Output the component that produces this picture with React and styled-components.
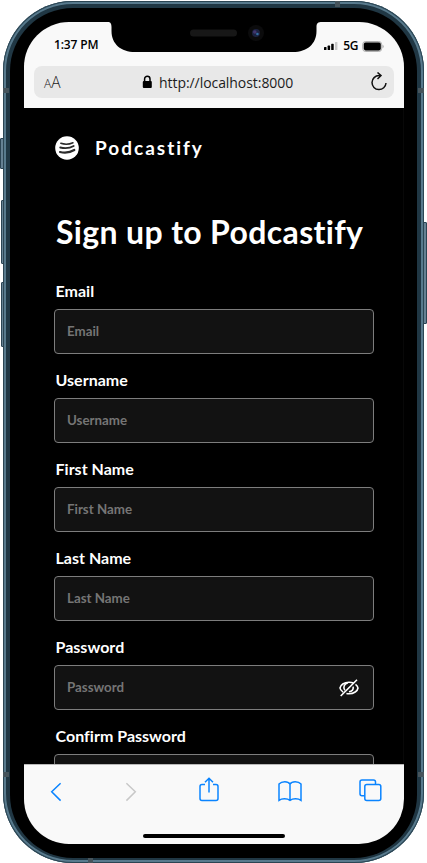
import React from "react";
import styled, { createGlobalStyle } from "styled-components";

const GlobalStyle = createGlobalStyle`
  * { box-sizing: border-box; }
  html, body { margin: 0; padding: 0; background: #fff; overflow: hidden; }
`;

const Stage = styled.div`
  position: relative;
  width: 427px;
  height: 863px;
  padding: 1px 3px 0;
  overflow: hidden;
`;

const SideButton = styled.span`
  position: absolute;
  top: ${(p) => p.$top}px;
  ${(p) => p.$side}: ${(p) => p.$inset || 0}px;
  width: 5px;
  height: ${(p) => p.$height}px;
  border: 1px solid #2c4554;
  border-radius: 1px;
  background: #668193;
`;

const Rim = styled.div`
  position: relative;
  width: 421px;
  height: 862px;
  padding: 7px 7px 5px;
  border-radius: 70px;
  background: #203744;
  box-shadow: inset 0 0 0 1px #2b4553, inset 0 0 0 3px #587a8d;
`;

const Antenna = styled.span`
  position: absolute;
  left: ${(p) => p.$x}px;
  top: ${(p) => p.$y}px;
  width: ${(p) => (p.$flat ? 5 : 6)}px;
  height: ${(p) => (p.$flat ? 6 : 5)}px;
  background: #46545c;
`;

const Bezel = styled.div`
  height: 100%;
  padding: 14px 13px 13px 14px;
  border-radius: 63px;
  background: #000;
`;

const Screen = styled.div`
  position: relative;
  display: flex;
  flex-direction: column;
  width: 380px;
  height: 822px;
  border-radius: 45px;
  overflow: hidden;
  background: #000;
`;

const BrowserTop = styled.header`
  flex: 0 0 86px;
  padding: 0 10px;
  background: #f9f9f9;
  color: #000;
`;

const StatusBar = styled.div`
  display: flex;
  justify-content: space-between;
  height: 44px;
  padding: 13px 10px 0 20px;
  font: 600 12px/20px "Open Sans", sans-serif;
  letter-spacing: -0.15px;
`;

const StatusRight = styled.div`
  display: flex;
  align-items: center;
  height: 22px;
  span { margin: 0 4px 0 5px; font-weight: 600; letter-spacing: -0.4px; }
`;

const Notch = styled.svg`
  position: absolute;
  top: 0;
  left: 84px;
`;

const AddressBar = styled.div`
  display: flex;
  align-items: center;
  height: 32px;
  padding: 0 7px 0 10px;
  border-radius: 8px;
  background: #e8e8e8;
  font: 14px/32px "Open Sans", sans-serif;
  color: #1c1c1c;
`;

const TextSize = styled.span`
  width: 98px;
  padding-top: 1px;
  font-size: 15.5px;
  font-weight: 300;
  line-height: 31px;
  small { font-size: 12px; }
`;

const Url = styled.span`
  flex: 1;
  margin-left: 6px;
  padding-top: 1px;
  font-size: 14px;
  line-height: 31px;
  letter-spacing: -0.06px;
  white-space: nowrap;
`;

const Page = styled.main`
  flex: 1;
  min-height: 0;
  overflow: hidden;
  padding: 28px 30px 0;
  border-right: 1px solid #080808;
  font-family: Lato, sans-serif;
  font-variant-ligatures: none;
  color: #fff;
`;

const Brand = styled.div`
  display: flex;
  align-items: center;
  gap: 16px;
  height: 24px;
  padding-left: 1px;
  font-size: 19px;
  font-weight: 700;
  line-height: 24px;
  letter-spacing: 2px;
`;

const Title = styled.h1`
  margin: 52px -10px 0 2px;
  font-size: 32px;
  font-weight: 700;
  line-height: 40px;
  white-space: nowrap;
  letter-spacing: 0.35px;
`;

const Form = styled.form`
  display: grid;
  gap: 16px;
  margin-top: 29px;
`;

const Field = styled.div`
  display: grid;
  grid-template-rows: 20px 45px;
  gap: 8px;
`;

const Label = styled.label`
  padding-left: 1.5px;
  font-size: 16px;
  font-weight: 700;
  line-height: 20px;
  letter-spacing: 0.02px;
`;

const InputBox = styled.div`
  display: flex;
  align-items: center;
  width: 320px;
  padding: 0 14px 0 12px;
  border: 1px solid #7d7d7d;
  border-radius: 4px;
  background: #121212;
`;

const Input = styled.input`
  flex: 1;
  min-width: 0;
  padding: 0 0 1px;
  border: 0;
  outline: 0;
  background: transparent;
  color: #fff;
  font: 700 13.33px/20px Lato, sans-serif;
  &::placeholder { color: #757575; opacity: 1; }
`;

const Toolbar = styled.nav`
  flex: 0 0 80px;
  border-top: 1px solid #b9b9b9;
  background: #f9f9f9;
`;

const ToolIcons = styled.div`
  display: flex;
  justify-content: space-between;
  padding: 12px 22px 0 25px;
  height: 69px;
`;

const ToolIcon = styled.svg`
  display: block;
  height: 28px;
  margin-left: ${(p) => p.$shift || 0}px;
  margin-right: ${(p) => -(p.$shift || 0)}px;
  fill: none;
  stroke: ${(p) => (p.$disabled ? "#c8c8c8" : "#0a84ff")};
  stroke-width: 1.5;
`;

const HomeBar = styled.div`
  width: 142px;
  height: 4px;
  margin: 0 auto;
  border-radius: 2px;
  background: #000;
`;

const NotchShape = () => (
  <Notch width="214" height="31" viewBox="0 0 214 31">
    <path d="M0 0H214C210 0 208.5 1 208.5 5V9C208.5 22 199 30 185 30H27C13 30 3.5 22 3.5 9V5C3.5 1 2 0 0 0Z" fill="#000" />
    <rect x="82" y="7.5" width="47" height="7" rx="3.5" fill="#171717" />
    <circle cx="148" cy="11" r="8" fill="#0b0b0c" />
    <circle cx="148" cy="11" r="4" fill="#1c2240" />
    <circle cx="146.8" cy="10" r="1.8" fill="#41366f" />
    <circle cx="149.4" cy="12" r="1.3" fill="#326fa3" />
  </Notch>
);

const Signal = () => (
  <svg width="14" height="10" viewBox="0 0 14 10">
    <rect x="0" y="6" width="2.5" height="3" rx=".6" />
    <rect x="3.6" y="4.6" width="2.5" height="4.4" rx=".6" />
    <rect x="7.2" y="2.8" width="2.5" height="6.2" rx=".6" />
    <rect x="11" y="1" width="2.4" height="8" rx=".6" fill="#c9c9c9" />
  </svg>
);

const Battery = () => (
  <svg width="22" height="12" viewBox="0 0 22 12">
    <rect x=".7" y="1.5" width="19" height="10" rx="3" fill="#d5d5d5" stroke="#b0b0b0" />
    <rect x="1.8" y="2.6" width="17" height="7.8" rx="1.8" />
    <path d="M20.6 4.8C22 5.5 22 7.5 20.6 8.2Z" fill="#999" />
  </svg>
);

const Lock = () => (
  <svg width="11" height="14" viewBox="0 0 11 14">
    <rect x=".8" y="6" width="9" height="7" rx="1" />
    <path d="M2.6 6.4V4a2.7 2.7 0 0 1 5.4 0v2.4" fill="none" stroke="#000" strokeWidth="1.5" />
  </svg>
);

const Reload = () => (
  <svg width="18" height="20" viewBox="0 0 18 20" fill="none" stroke="#111" strokeWidth="1.5">
    <path d="M11.5 3.6H10a7 7 0 1 0 7 7.4M8.5 .5 12 3.6 8.5 7" />
  </svg>
);

const Logo = () => (
  <svg width="24" height="24" viewBox="0 0 24 24" fill="none" stroke="#2b2b2b" strokeLinecap="round">
    <circle cx="12" cy="12" r="11.8" fill="#fff" stroke="none" />
    <path d="M5.8 7.3Q12 9.3 18 6.7" strokeWidth="1.5" />
    <path d="M5.2 11.5Q13 13.3 18.7 10" strokeWidth="1.8" />
    <path d="M5 16Q13 17.8 19.3 14" strokeWidth="2.2" />
  </svg>
);

const EyeOff = () => (
  <svg width="20" height="20" viewBox="0 0 20 20" fill="none" stroke="#fff" strokeWidth="1.6">
    <path d="M4.1 14.1C2.4 13 1.2 11.5 1 10c.5-3 4-5.8 9-5.8 1.8 0 3.2.3 4.5.9M16.5 6.3c1.5 1 2.3 2.3 2.5 3.7-.5 3-4 5.8-9 5.8-.9 0-1.8-.1-2.6-.3" />
    <path d="M5.8 12.2A4.5 4.5 0 0 1 8.8 5M14.2 8.6c.3 2.9-1.5 4.8-4.3 5.1M1.7 18 18 1.7" />
  </svg>
);

const fields = [
  { label: "Email" },
  { label: "Username" },
  { label: "First Name" },
  { label: "Last Name" },
  { label: "Password", secret: true },
  { label: "Confirm Password", secret: true },
];

export default function App() {
  return (
    <>
      <GlobalStyle />
      <Stage>
        <SideButton $side="left" $top={138} $height={31} />
        <SideButton $side="left" $inset={1} $top={200} $height={64} />
        <SideButton $side="left" $inset={1} $top={282} $height={65} />
        <SideButton $side="right" $top={222} $height={102} />
        <Rim>
          <Antenna $x={0} $y={87} />
          <Antenna $x={415} $y={87} />
          <Antenna $x={0} $y={771} />
          <Antenna $x={415} $y={771} />
          <Antenna $flat $x={332} $y={0} />
          <Antenna $flat $x={85} $y={857} />
          <Bezel>
            <Screen>
              <BrowserTop>
                <StatusBar>
                  <span>1:37 PM</span>
                  <StatusRight><Signal /><span>5G</span><Battery /></StatusRight>
                </StatusBar>
                <AddressBar>
                  <TextSize><small>A</small>A</TextSize>
                  <Lock />
                  <Url>http://localhost:8000</Url>
                  <Reload />
                </AddressBar>
              </BrowserTop>
              <NotchShape />
              <Page>
                <Brand><Logo /><span>Podcastify</span></Brand>
                <Title>Sign up to Podcastify</Title>
                <Form>
                  {fields.map((f) => (
                    <Field key={f.label}>
                      <Label htmlFor={f.label}>{f.label}</Label>
                      <InputBox>
                        <Input id={f.label} placeholder={f.label} type={f.secret ? "password" : "text"} />
                        {f.secret && <EyeOff />}
                      </InputBox>
                    </Field>
                  ))}
                </Form>
              </Page>
              <Toolbar>
                <ToolIcons>
                  <ToolIcon width="14" viewBox="0 0 14 28"><path d="M11.6 6.2 2.7 14.8l8.9 8.8" /></ToolIcon>
                  <ToolIcon $disabled $shift={1} width="14" viewBox="0 0 14 28"><path d="M2.4 6.2l8.9 8.6-8.9 8.8" /></ToolIcon>
                  <ToolIcon $shift={3} width="20" viewBox="0 0 20 28"><path d="M6 7.5H3a2 2 0 0 0-2 2v12a2 2 0 0 0 2 2h14a2 2 0 0 0 2-2v-12a2 2 0 0 0-2-2h-3M10 15.5V1.5M6 5.3l4-4 4 4" /></ToolIcon>
                  <ToolIcon $shift={2} width="24" viewBox="0 0 24 28"><path d="M12 7Q10.5 4.7 6.8 4.7T1 7V23.3Q3 21.8 6.5 21.8T12 23.3Q14 21.8 17.5 21.8T23 23.3V7Q21 4.7 17.2 4.7T12 7V23.3" /></ToolIcon>
                  <ToolIcon width="23" viewBox="0 0 23 28"><path d="M5.5 18.7H3a2 2 0 0 1-2-2V5a2 2 0 0 1 2-2h11.5a2 2 0 0 1 2 2v2.5" /><rect x="5.8" y="7.5" width="16" height="16" rx="2" /></ToolIcon>
                </ToolIcons>
                <HomeBar />
              </Toolbar>
            </Screen>
          </Bezel>
        </Rim>
      </Stage>
    </>
  );
}
